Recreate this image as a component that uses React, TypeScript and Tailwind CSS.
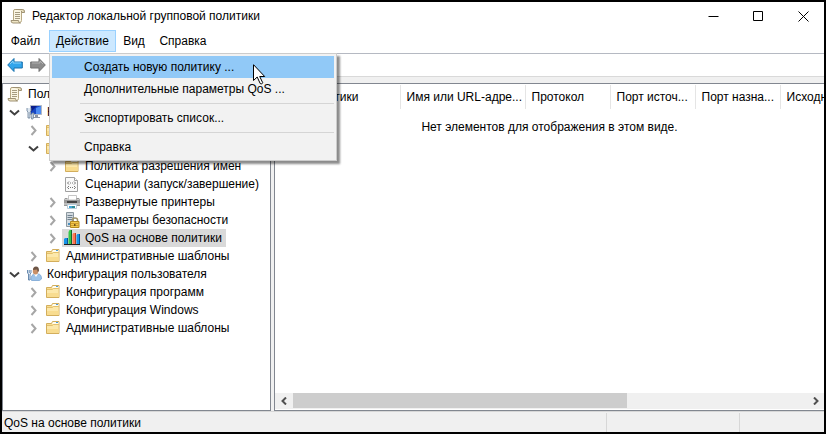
import clsx from 'clsx'
import type { ReactNode } from 'react'

const ScrollIcon = () => (
  <svg className="size-4 shrink-0" viewBox="0 0 16 16" aria-hidden="true">
    <path d="M4 1.500h9l-1.500 3v8q0 2-2 2H3.500V3q0-1.500 1.500-1.500z" fill="#fbf6e3" stroke="#b8a983" />
    <path d="M5.500 1.500h7q2.500 0 2 3H11.500V3" fill="#e6dcba" stroke="#9f9274" />
    <path d="M1 12.500h7.500q0 2.500 2 2.500H3q-2 0-2-2.500z" fill="#efe5c5" stroke="#9f9274" />
    <path d="M5 4.500h5M5 6.500h5M5 8.500h5M5 10.500h5" stroke="#a59b80" />
  </svg>
)

const FolderIcon = () => (
  <svg className="size-4 shrink-0" viewBox="0 0 16 16" aria-hidden="true">
    <path d="M1.500 3.500h5l1-2h6.500v12h-12.500z" fill="#f8dd93" stroke="#d3ae5c" />
    <path d="M8 2h5.500v2H7z" fill="#fffdf2" />
    <path d="M11 2h2v1h-2z" fill="#4c9bd8" />
    <path d="M2 5h11.500v8H2z" fill="#fce8ab" />
    <path d="M2 9h11.500v4H2z" fill="#f8dc90" />
    <path d="M2 5.500h5.500l1-1h5" fill="none" stroke="#e3c06b" />
  </svg>
)

const ComputerIcon = () => (
  <svg className="size-4 shrink-0" viewBox="0 0 16 16" aria-hidden="true">
    <path d="M4.500 1.500h11v9h-11z" fill="#1746c4" stroke="#b3b9c4" />
    <path d="M5 2h6L5 8z" fill="#0a1e8c" />
    <path d="M10 10V4l5-2v8z" fill="#4d8cf2" />
    <path d="M9 11h3v2h2v1H7v-1h2z" fill="#8b95a5" />
    <path d="M1 4v3l1 1v6h2V8l1-1V4M6 9h2l-1 6H5.500z" fill="#dce6f0" stroke="#657c96" strokeWidth=".8" />
  </svg>
)

const UserIcon = () => (
  <svg className="size-4 shrink-0" viewBox="0 0 16 16" aria-hidden="true">
    <path d="M5 14q0-6 4-6h3q3.500 0 3.500 5l-2 1.500H6z" fill="#9dc3e8" stroke="#78a5d3" strokeWidth=".8" />
    <path d="M8 8l2 3 2-3z" fill="#fff" />
    <ellipse cx="9.500" cy="5" rx="2.700" ry="3.500" fill="#c99067" />
    <path d="M7 4q0-3.500 3-3.500t3 4l-1 2-1-3z" fill="#6d5546" />
    <path d="M1.500 4v3l1 1v6h1.500V8l1-1V4M3.200 4v3" fill="#e8f1fa" stroke="#47709c" strokeWidth=".8" />
  </svg>
)

const ScriptIcon = () => (
  <svg className="size-4 shrink-0" viewBox="0 0 16 16" aria-hidden="true">
    <path d="M1.500 1.500h9l3 3v11h-12z" fill="#fafafa" stroke="#a0a0a0" />
    <path d="M10.500 1.500v3h3" fill="#fff" stroke="#a0a0a0" />
    <path d="M5 5.500L3.500 7 5 8.500M10 5.500L11.500 7 10 8.500M5 10L3.500 11.500 5 13M10 10l1.500 1.500L10 13" fill="none" stroke="#777" />
    <path d="M6 7h3M6 11.500h3" stroke="#777" strokeDasharray="1 1" />
  </svg>
)

const PrinterIcon = () => (
  <svg className="size-4 shrink-0" viewBox="0 0 16 16" aria-hidden="true">
    <path d="M4.500 1.500h8V6h-8z" fill="#fff" stroke="#c5c5c5" />
    <path d="M1 4h2.500v2h9V4H15l1 2v6H0V6z" fill="#999" />
    <path d="M1 5h2v1H1zM13 5h2v1h-2z" fill="#ccc" />
    <path d="M3 7h10v2H3z" fill="#454545" />
    <path d="M0 9h16v2H0z" fill="#bcbcbc" />
    <path d="M3.500 10.500h9v4h-9z" fill="#fff" stroke="#b6cbd8" />
    <path d="M5 12h3v2H5z" fill="#43a6d8" />
    <path d="M8 12h3v2H8z" fill="#318c95" />
  </svg>
)

const SecurityIcon = () => (
  <svg className="size-4 shrink-0" viewBox="0 0 16 16" aria-hidden="true">
    <path d="M2.500.5h7v14h-7z" fill="#d3dae0" stroke="#8c989f" />
    <path d="M3.500 3.500h5M3.500 5.500h5M3.500 7.500h5" stroke="#71828f" />
    <path d="M4 11h2v2H4z" fill="#4d91be" />
    <path d="M8.500 9.500V8q0-2 2.500-2t2.500 2v1.500" fill="none" stroke="#a0946a" strokeWidth="1.500" />
    <path d="M6.500 9.500h8.500v6H6.500z" fill="#f3ca4c" stroke="#b58a22" />
    <path d="M7 11.500h7.500M7 13.500h7.500" stroke="#cf9c30" />
    <path d="M10 12h1.500v2H10z" fill="#70551a" />
  </svg>
)

const QosIcon = () => (
  <svg className="size-4 shrink-0" viewBox="0 0 16 16" aria-hidden="true">
    <path d="M0 9l1-1h3v7H0z" fill="#1794e8" />
    <path d="M3 8h1v7H3z" fill="#075398" />
    <path d="M4.500 2l1-2H7v15H4.500z" fill="#35c84a" />
    <path d="M7 0h1v15H7z" fill="#14672a" />
    <path d="M8.500 4l1-1H11v12H8.500z" fill="#ff7850" />
    <path d="M11 3h1v12h-1z" fill="#b5402a" />
    <path d="M12.500 5l1-1H15v11h-2.500z" fill="#1794e8" />
    <path d="M15 4h1v11h-1z" fill="#075398" />
    <path d="M0 14.500h16" stroke="#222" />
  </svg>
)

const ArrowIcon = ({ forward = false }: { forward?: boolean }) => (
  <svg className={clsx('size-4', forward && 'rotate-180')} viewBox="0 0 16 16" aria-hidden="true">
    <path
      d="M.7 8L7 1.500v3.500h8.300v6H7v3.500z"
      fill={forward ? '#8b8b8b' : '#31a5ec'}
      stroke={forward ? '#707070' : '#1971ad'}
      strokeLinejoin="round"
    />
    <path
      d={forward ? 'M3 9l3 3v-2h8' : 'M3 7l3-3v2h8'}
      fill="none"
      stroke={forward ? '#b2b2b2' : '#8bd3fa'}
    />
  </svg>
)

const Chevron = ({ open }: { open: boolean }) => (
  <svg className="size-[11px]" viewBox="0 0 11 11" fill="none" strokeWidth="2" aria-hidden="true">
    {open ? <path d="M1 3.500l4.500 4 4.500-4" stroke="#404040" /> : <path d="M3.500 1l4 4.500-4 4.500" stroke="#a6a6a6" />}
  </svg>
)

type Node = {
  label: string
  icon: () => ReactNode
  indent: string
  open?: boolean
  selected?: boolean
}

const level1 = 'pl-[5px]'
const level2 = 'pl-6'
const level3 = 'pl-[43px]'

const nodes: Node[] = [
  { label: 'Конфигурация компьютера', icon: ComputerIcon, indent: level1, open: true },
  { label: 'Конфигурация программ', icon: FolderIcon, indent: level2, open: false },
  { label: 'Конфигурация Windows', icon: FolderIcon, indent: level2, open: true },
  { label: 'Политика разрешения имен', icon: FolderIcon, indent: level3, open: false },
  { label: 'Сценарии (запуск/завершение)', icon: ScriptIcon, indent: level3 },
  { label: 'Развернутые принтеры', icon: PrinterIcon, indent: level3, open: false },
  { label: 'Параметры безопасности', icon: SecurityIcon, indent: level3, open: false },
  { label: 'QoS на основе политики', icon: QosIcon, indent: level3, open: false, selected: true },
  { label: 'Административные шаблоны', icon: FolderIcon, indent: level2, open: false },
  { label: 'Конфигурация пользователя', icon: UserIcon, indent: level1, open: true },
  { label: 'Конфигурация программ', icon: FolderIcon, indent: level2, open: false },
  { label: 'Конфигурация Windows', icon: FolderIcon, indent: level2, open: false },
  { label: 'Административные шаблоны', icon: FolderIcon, indent: level2, open: false },
]

const columns = [
  { label: 'Имя политики', width: 'w-[125px]' },
  { label: 'Имя или URL-адре...', width: 'w-[125px]' },
  { label: 'Протокол', width: 'w-[85px]' },
  { label: 'Порт источ...', width: 'w-[85px]' },
  { label: 'Порт назна...', width: 'w-[85px]' },
  { label: 'Исходный', width: 'w-[85px]' },
]

function ActionMenu() {
  const item = 'block h-[22px] w-full pl-8 text-left'
  return (
    <div
      role="menu"
      className="absolute top-full left-0 z-10 mt-px w-[288px] border border-[#ccc] bg-[#f2f2f2] p-0.5 shadow-[3px_3px_2px_rgba(0,0,0,0.45)]"
    >
      <button role="menuitem" className={clsx(item, 'bg-[#91c9f7]')}>
        Создать новую политику ...
      </button>
      <button role="menuitem" className={item}>
        Дополнительные параметры QoS ...
      </button>
      <hr className="my-[3px] ml-7 border-[#d5d5d5]" />
      <button role="menuitem" className={item}>
        Экспортировать список...
      </button>
      <hr className="my-[3px] ml-7 border-[#d5d5d5]" />
      <button role="menuitem" className={item}>
        Справка
      </button>
      <svg className="absolute top-[10px] left-[203px] h-[22px] w-[14px]" viewBox="0 0 14 22" aria-hidden="true">
        <path d="M.5.7v15.800l3.700-3.500 3 6.500q1.500 1.500 2.500-.8l-3-6.200h5z" fill="#fff" stroke="#000" />
      </svg>
    </div>
  )
}

export default function App() {
  return (
    <div className="flex h-screen flex-col overflow-hidden border-2 border-black bg-white font-['Liberation_Sans','Noto_Sans',sans-serif] text-[12px] leading-[22px] text-black">
      <header className="flex h-7 shrink-0 items-center pl-2">
        <ScrollIcon />
        <h1 className="ml-1.5 grow">Редактор локальной групповой политики</h1>
        <div className="flex h-full gap-1">
          <button aria-label="Свернуть" className="flex w-[41px] items-center justify-center">
            <svg className="size-[11px]" viewBox="0 0 11 11">
              <path d="M.5 5.500h10" stroke="#000" />
            </svg>
          </button>
          <button aria-label="Развернуть" className="flex w-[41px] items-center justify-center">
            <svg className="size-[11px]" viewBox="0 0 11 11">
              <path d="M.5.5h9v9h-9z" fill="none" stroke="#000" />
            </svg>
          </button>
          <button aria-label="Закрыть" className="flex w-[41px] items-center justify-center">
            <svg className="size-[11px]" viewBox="0 0 11 11">
              <path d="M.5.5l10 10M10.500.5l-10 10" stroke="#000" />
            </svg>
          </button>
        </div>
      </header>

      <nav className="flex h-6 shrink-0 items-center border-b border-[#b5b9c2] pb-px">
        <button className="w-[47px] text-center">Файл</button>
        <div className="relative">
          <button className="block h-[22px] w-[67px] border border-[#99d1ff] bg-[#cce8ff] leading-5">Действие</button>
          <ActionMenu />
        </div>
        <button className="w-9">Вид</button>
        <button className="w-[62px]">Справка</button>
      </nav>

      <div className="flex h-[23px] shrink-0 items-center gap-[7px] border-b border-[#d9d9d9] pl-[5px]">
        <button aria-label="Назад">
          <ArrowIcon />
        </button>
        <button aria-label="Вперед">
          <ArrowIcon forward />
        </button>
      </div>

      <main className="flex min-h-0 grow gap-[3px] bg-[#f0f0f0] pt-1.5">
        <aside className="w-[269px] shrink-0 overflow-hidden border border-[#828790] bg-white pt-px">
          <ul role="tree" className="leading-[18px] whitespace-nowrap">
            <li role="treeitem" className="flex h-[18px] items-center gap-[5px] pl-1">
              <ScrollIcon />
              Политика «Локальный компьютер»
            </li>
            {nodes.map((node, i) => (
              <li
                key={i}
                role="treeitem"
                aria-expanded={node.open}
                aria-selected={node.selected}
                className={clsx('flex h-[18px] items-center', node.indent)}
              >
                <span className="flex w-4 items-center pl-px">
                  {node.open !== undefined && <Chevron open={node.open} />}
                </span>
                <span className={clsx('flex h-full items-center gap-[5px] pr-1 pl-0.5', node.selected && 'bg-[#d9d9d9]')}>
                  <node.icon />
                  {node.label}
                </span>
              </li>
            ))}
          </ul>
        </aside>

        <section className="flex min-w-0 grow flex-col overflow-hidden border border-r-0 border-[#828790] bg-white">
          <div className="min-h-0 grow overflow-hidden pt-px">
            <table className="w-[590px] table-fixed border-collapse">
              <thead>
                <tr className="h-6">
                  {columns.map((c) => (
                    <th
                      key={c.label}
                      className={clsx('border-r border-[#e5e5e5] pl-1.5 text-left font-normal whitespace-nowrap', c.width)}
                    >
                      {c.label}
                    </th>
                  ))}
                </tr>
              </thead>
            </table>
            <p className="mt-[7px] text-center">Нет элементов для отображения в этом виде.</p>
          </div>
          <div className="mb-px flex h-4 shrink-0 items-center bg-[#f0f0f0]">
            <button aria-label="Прокрутить влево" className="flex w-[18px] justify-center">
              <svg className="size-2" viewBox="0 0 8 8" fill="none">
                <path d="M6 .5L2.500 4 6 7.500" stroke="#505050" strokeWidth="2" />
              </svg>
            </button>
            <div className="h-full grow">
              <div className="h-[15px] w-[65%] bg-[#cdcdcd]" />
            </div>
            <button aria-label="Прокрутить вправо" className="flex w-[17px] justify-center">
              <svg className="size-2" viewBox="0 0 8 8" fill="none">
                <path d="M2 .5L5.500 4 2 7.500" stroke="#505050" strokeWidth="2" />
              </svg>
            </button>
          </div>
        </section>
      </main>

      <footer className="flex h-[21px] shrink-0 border-t border-[#d7d7d7] bg-[#f0f0f0] pl-0.5">
        <span className="grow">QoS на основе политики</span>
        <span className="mt-px w-[133px] border-l border-[#d7d7d7]" />
        <span className="mt-px w-[85px] border-l border-[#d7d7d7]" />
      </footer>
    </div>
  )
}
